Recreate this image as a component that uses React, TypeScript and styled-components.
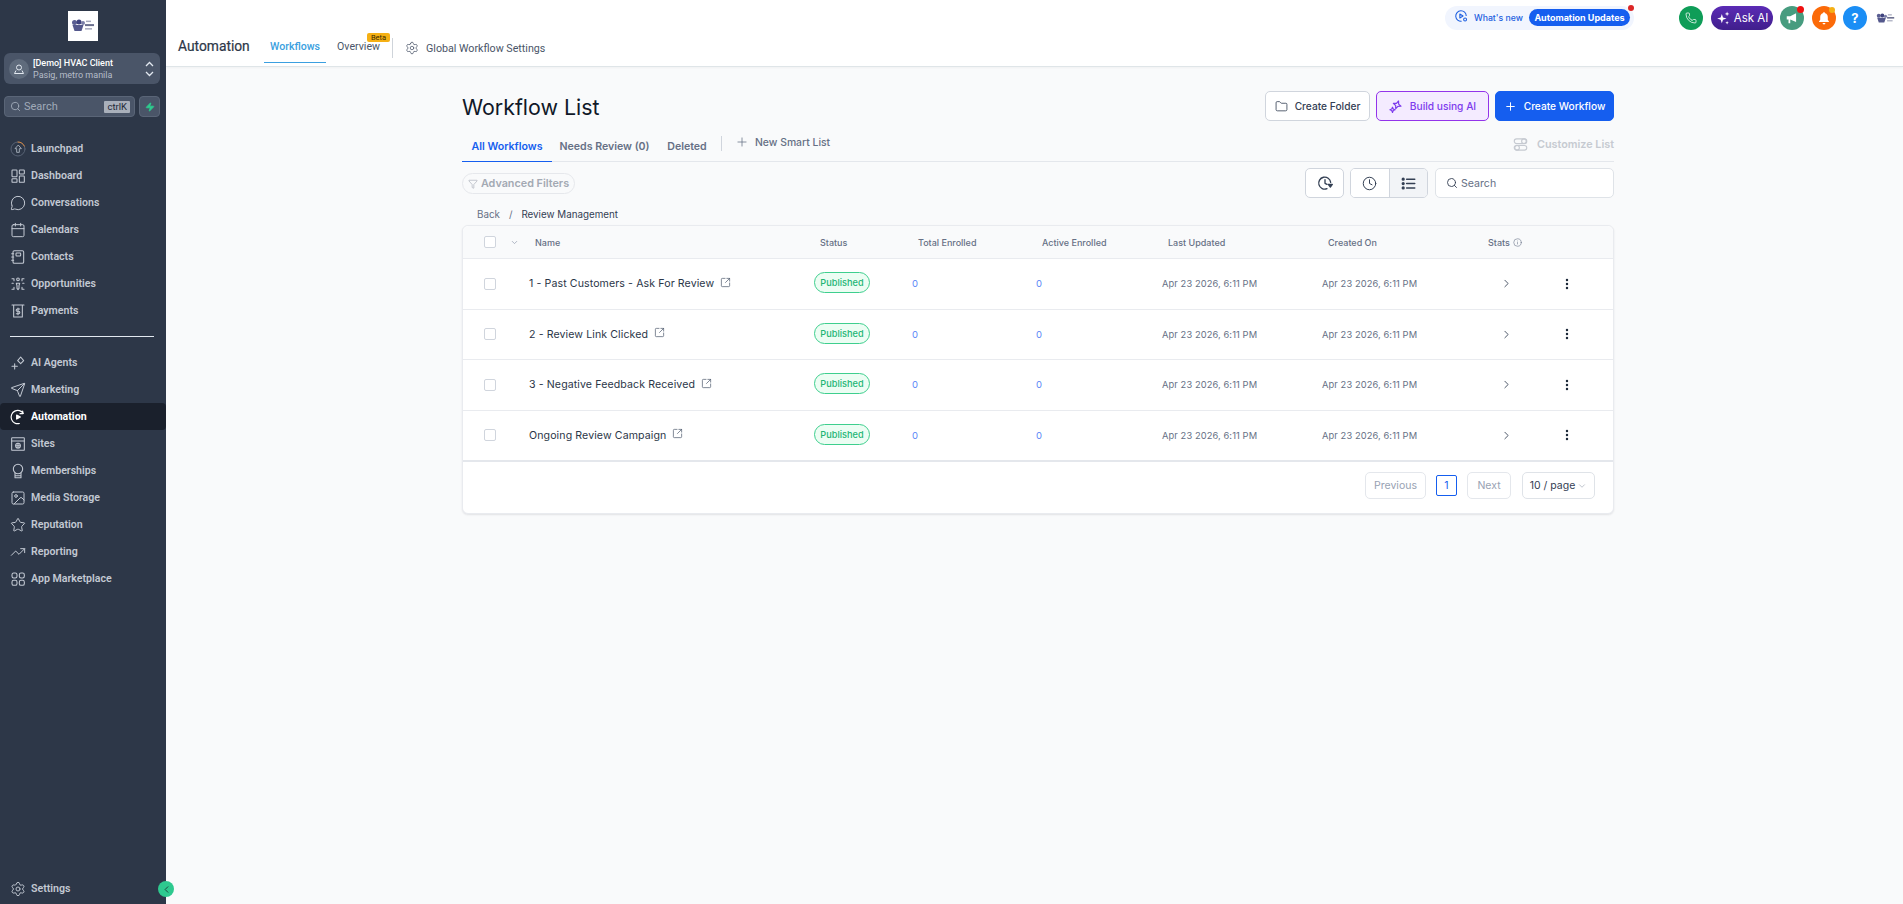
import React from "react";
import styled, { createGlobalStyle } from "styled-components";
import {
  Calendar,
  ChevronDown,
  ChevronLeft,
  ChevronRight,
  Clock,
  Folder,
  Funnel,
  Image as ImageIcon,
  Info,
  MessageCircle,
  MoreVertical,
  Phone,
  Plus,
  Search,
  Send,
  Settings,
  SquareArrowOutUpRight,
  Star,
  TrendingUp,
  Zap,
} from "lucide-react";

const GlobalStyle = createGlobalStyle`
  html, body { margin: 0; padding: 0; height: 100%; overflow: hidden; }
  body { font-family: Inter, "Liberation Sans", sans-serif; background: #f9fafb; }
  * { box-sizing: border-box; }
`;

const Page = styled.div`
  display: flex;
  width: 1903px;
  height: 904px;
  overflow: hidden;
`;

/* ---------- sidebar ---------- */

const Sidebar = styled.aside`
  position: relative;
  flex: 0 0 166px;
  display: flex;
  flex-direction: column;
  background: #2d3748;
  font-family: Roboto, Inter, sans-serif;
  padding-top: 11px;
`;

const LogoBox = styled.div`
  width: 30px;
  height: 30px;
  margin: 0 auto;
  background: #fff;
  display: flex;
  align-items: center;
  justify-content: center;
`;

const LocationBox = styled.div`
  display: flex;
  align-items: center;
  height: 31px;
  margin: 12px 6px 0 4px;
  padding: 0 6px 0 5px;
  border-radius: 6px;
  background: #4a5568;
`;

const LocationAvatar = styled.div`
  width: 20px;
  height: 20px;
  border-radius: 50%;
  background: #5f6b7c;
  display: flex;
  align-items: center;
  justify-content: center;
  margin-right: 4px;
  flex: none;
`;

const LocationText = styled.div`
  flex: 1;
  min-width: 0;
`;

const LocationName = styled.div`
  color: #fff;
  font-size: 9px;
  font-weight: 500;
  line-height: 12px;
`;

const LocationSub = styled.div`
  color: #b6bdc8;
  font-size: 9px;
  line-height: 12px;
`;

const SearchRow = styled.div`
  display: flex;
  gap: 4px;
  margin: 12px 6px 0 4px;
`;

const SideSearch = styled.div`
  flex: 1;
  height: 21px;
  display: flex;
  align-items: center;
  gap: 3px;
  padding: 0 4px 0 5px;
  border-radius: 4px;
  background: #4a5568;
  border: 1px solid #5a6577;
  color: #a0aab8;
  font-size: 11px;
`;

const KeyHint = styled.span`
  margin-left: auto;
  background: #a9b0bb;
  color: #1f2937;
  font-size: 9.5px;
  line-height: 12px;
  padding: 0 3px;
  border-radius: 1px;
`;

const BoltButton = styled.div`
  width: 21px;
  height: 21px;
  border-radius: 4px;
  background: #4a5568;
  border: 1px solid #5a6577;
  display: flex;
  align-items: center;
  justify-content: center;
`;

const NavGroup = styled.nav<{ $top: number }>`
  margin-top: ${(p) => p.$top}px;
  display: flex;
  flex-direction: column;
`;

const NavItem = styled.div<{ $active?: boolean }>`
  height: 27px;
  display: flex;
  align-items: center;
  gap: 5px;
  padding-left: 10px;
  border-radius: 4px;
  font-size: 10.6px;
  font-weight: ${(p) => (p.$active ? 700 : 600)};
  color: ${(p) => (p.$active ? "#ffffff" : "#c3c9d3")};
  background: ${(p) => (p.$active ? "#1a202c" : "transparent")};
  svg {
    flex: none;
    color: ${(p) => (p.$active ? "#ffffff" : "#c3c9d3")};
  }
`;

const SideDivider = styled.div`
  height: 1px;
  background: #e2e8f0;
  margin: 12px 12px 12px 10px;
`;

const SettingsRow = styled.div`
  margin-top: auto;
  margin-bottom: 2px;
`;

const CollapseButton = styled.div`
  position: absolute;
  right: -8px;
  bottom: 7px;
  width: 16px;
  height: 16px;
  border-radius: 50%;
  background: #2ec98f;
  color: #1f3b3a;
  display: flex;
  align-items: center;
  justify-content: center;
`;

/* ---------- top bar ---------- */

const Content = styled.div`
  flex: 1;
  min-width: 0;
  display: flex;
  flex-direction: column;
`;

const TopBar = styled.header`
  height: 67px;
  flex: none;
  background: #fff;
  border-bottom: 1px solid #dfe5e8;
  box-shadow: 0 1px 2px rgba(0, 0, 0, 0.04);
  display: flex;
  justify-content: space-between;
  font-family: Roboto, Inter, sans-serif;
`;

const TopLeft = styled.div`
  display: flex;
  align-items: flex-end;
  padding-left: 12px;
`;

const TopTitle = styled.div`
  width: 71px;
  font-size: 13.8px;
  font-weight: 400;
  color: #2d3748;
  line-height: 20px;
  margin: 0 15px 10px 0;
  white-space: nowrap;
  -webkit-text-stroke: 0.2px #2d3748;
`;

const TopTab = styled.div<{ $active?: boolean }>`
  position: relative;
  height: 34px;
  padding: 10px 6px 0;
  margin-right: ${(p) => (p.$active ? 5 : 0)}px;
  font-size: 10.6px;
  line-height: 16px;
  font-weight: ${(p) => (p.$active ? 500 : 400)};
  color: ${(p) => (p.$active ? "#3b9fe0" : "#4a5568")};
  border-bottom: 1px solid ${(p) => (p.$active ? "#3b9fe0" : "transparent")};
  margin-bottom: 3px;
  white-space: nowrap;
`;

const BetaBadge = styled.span`
  position: absolute;
  right: -4px;
  top: 4px;
  width: 23px;
  height: 9px;
  border-radius: 2px;
  background: #f5b014;
  color: #3a2c00;
  font-size: 7.5px;
  line-height: 9px;
  text-align: center;
`;

const TopDivider = styled.div`
  width: 1px;
  height: 20px;
  background: #cfd4da;
  margin: 0 12px 8px 6px;
`;

const GlobalLink = styled.div`
  display: flex;
  align-items: center;
  gap: 7px;
  font-size: 10.7px;
  color: #4a5568;
  height: 20px;
  margin-bottom: 8px;
  white-space: nowrap;
`;

const TopRight = styled.div`
  display: flex;
  align-items: flex-start;
  padding: 6px 7px 0 0;
`;

const NewsPill = styled.div`
  position: relative;
  width: 189px;
  height: 24px;
  margin-right: 45px;
  padding: 3px 4px 0 9px;
  border-radius: 12px;
  background: #f1f5fe;
  display: flex;
  align-items: flex-start;
  color: #1d5fe0;
  font-size: 8.7px;
  font-weight: 500;
  font-family: Inter, sans-serif;
`;

const NewsLabel = styled.span`
  margin-left: 6px;
  line-height: 18px;
  white-space: nowrap;
`;

const NewsTag = styled.span`
  margin-left: auto;
  width: 101px;
  height: 17px;
  border-radius: 9px;
  background: #155eef;
  color: #fff;
  font-size: 9px;
  font-weight: 700;
  line-height: 17px;
  text-align: center;
  white-space: nowrap;
`;

const Dot = styled.span<{ $color: string; $size: number; $top: number; $right: number }>`
  position: absolute;
  width: ${(p) => p.$size}px;
  height: ${(p) => p.$size}px;
  top: ${(p) => p.$top}px;
  right: ${(p) => p.$right}px;
  border-radius: 50%;
  background: ${(p) => p.$color};
`;

const RoundButton = styled.div<{ $bg: string; $gap: number }>`
  position: relative;
  width: 24px;
  height: 24px;
  border-radius: 50%;
  background: ${(p) => p.$bg};
  margin-right: ${(p) => p.$gap}px;
  color: #fff;
  display: flex;
  align-items: center;
  justify-content: center;
  font-size: 13px;
  font-weight: 700;
  font-family: Inter, sans-serif;
`;

const AskAi = styled.div`
  width: 62px;
  height: 24px;
  margin-right: 7px;
  border-radius: 12px;
  background: linear-gradient(180deg, #5b2bb5, #401f8c);
  color: #fff;
  font-size: 11.5px;
  display: flex;
  align-items: center;
  justify-content: center;
  gap: 4px;
  font-family: Inter, sans-serif;
`;

const TinyLogo = styled.div`
  width: 19px;
  height: 24px;
  margin-left: 2px;
  margin-right: 1px;
  display: flex;
  align-items: center;
`;

/* ---------- main ---------- */

const Main = styled.main`
  flex: 1;
  padding: 24px 0 0 296px;
  width: 1448px;
`;

const HeadRow = styled.div`
  display: flex;
  align-items: center;
  justify-content: space-between;
  height: 30px;
`;

const PageTitle = styled.h1`
  margin: 2px 0 0;
  font-size: 21.4px;
  font-weight: 400;
  color: #101828;
`;

const Actions = styled.div`
  display: flex;
  gap: 6px;
`;

const ActionButton = styled.button<{ $kind: "plain" | "ai" | "primary"; $w: number }>`
  width: ${(p) => p.$w}px;
  height: 30px;
  border-radius: 5px;
  display: flex;
  align-items: center;
  justify-content: center;
  gap: 7px;
  font-family: Inter, sans-serif;
  font-size: 10.2px;
  font-weight: 500;
  padding: 0;
  border: 1px solid
    ${(p) => (p.$kind === "plain" ? "#d0d5dd" : p.$kind === "ai" ? "#9333ea" : "#155eef")};
  background: ${(p) => (p.$kind === "plain" ? "#fff" : p.$kind === "ai" ? "#f4ebff" : "#155eef")};
  color: ${(p) => (p.$kind === "plain" ? "#344054" : p.$kind === "ai" ? "#7c3aed" : "#fff")};
`;

const TabsRow = styled.div`
  display: flex;
  align-items: flex-end;
  height: 34px;
  margin-top: 7px;
  border-bottom: 1px solid #e4e7ec;
`;

const ListTab = styled.div<{ $active?: boolean; $w: number }>`
  width: ${(p) => p.$w}px;
  height: 34px;
  margin-bottom: -1px;
  text-align: center;
  padding-top: 11px;
  font-size: 10.6px;
  line-height: 16px;
  font-weight: 600;
  color: ${(p) => (p.$active ? "#155eef" : "#667085")};
  border-bottom: 1px solid ${(p) => (p.$active ? "#155eef" : "transparent")};
`;

const TabSep = styled.div`
  width: 1px;
  height: 15px;
  background: #d0d5dd;
  margin: 0 13px 10px 4px;
  align-self: flex-end;
`;

const SmartList = styled.div`
  display: flex;
  align-items: center;
  gap: 6px;
  height: 20px;
  margin-bottom: 9px;
  font-size: 10.4px;
  font-weight: 500;
  color: #667085;
`;

const CustomizeList = styled.div`
  margin-left: auto;
  display: flex;
  align-items: center;
  gap: 9px;
  height: 20px;
  margin-bottom: 7px;
  font-size: 10.8px;
  font-weight: 600;
  color: #c6cad1;
`;

const FilterRow = styled.div`
  display: flex;
  align-items: flex-start;
  margin-top: 6px;
  height: 30px;
`;

const FilterPill = styled.div`
  margin-top: 5px;
  width: 113px;
  height: 21px;
  border-radius: 11px;
  border: 1px solid #e6e8ec;
  display: flex;
  align-items: center;
  justify-content: center;
  gap: 3px;
  font-size: 10.8px;
  font-weight: 600;
  color: #a3a9b3;
`;

const IconButton = styled.div`
  margin-left: auto;
  width: 39px;
  height: 30px;
  border-radius: 5px;
  border: 1px solid #d0d5dd;
  background: #fff;
  color: #344054;
  display: flex;
  align-items: center;
  justify-content: center;
`;

const ViewGroup = styled.div`
  margin-left: 6px;
  display: flex;
  width: 78px;
  height: 30px;
  border: 1px solid #d0d5dd;
  border-radius: 5px;
  overflow: hidden;
  background: #fff;
`;

const ViewCell = styled.div<{ $on?: boolean }>`
  flex: 1;
  display: flex;
  align-items: center;
  justify-content: center;
  color: #344054;
  background: ${(p) => (p.$on ? "#f2f4f7" : "#fff")};
  & + & {
    border-left: 1px solid #d0d5dd;
  }
`;

const TableSearch = styled.div`
  margin-left: 7px;
  width: 179px;
  height: 30px;
  border-radius: 5px;
  border: 1px solid #dfe3e8;
  background: #fff;
  display: flex;
  align-items: center;
  gap: 3px;
  padding-left: 10px;
  font-size: 10.6px;
  color: #667085;
  svg {
    color: #344054;
  }
`;

const Crumbs = styled.div`
  display: flex;
  height: 16px;
  margin-top: 9px;
  padding-left: 15px;
  font-size: 9.8px;
  line-height: 16px;
  color: #344054;
`;

const CrumbBack = styled.span`
  color: #667085;
`;

const CrumbSep = styled.span`
  margin: 0 9px;
  color: #667085;
`;

const Card = styled.section`
  margin-top: 2px;
  background: #fff;
  border: 1px solid #e9ebef;
  border-radius: 6px;
  box-shadow: 0 1px 2px rgba(16, 24, 40, 0.1);
  height: 289px;
`;

const columns = "66px 285px 98px 124px 126px 160px 160px 78px 1fr";

const HeadGrid = styled.div`
  display: grid;
  grid-template-columns: ${columns};
  align-items: center;
  height: 33px;
  border-bottom: 1px solid #e9ebef;
  background: #f9fafb;
  border-radius: 6px 6px 0 0;
`;

const HeadCell = styled.div`
  padding-left: 6px;
  font-size: 9px;
  font-weight: 500;
  color: #667085;
  white-space: nowrap;
  display: flex;
  align-items: center;
  gap: 3px;
`;

const CheckCell = styled.div`
  display: flex;
  align-items: center;
  padding-left: 21px;
  gap: 14px;
  color: #98a2b3;
`;

const CheckBox = styled.span`
  width: 12px;
  height: 12px;
  border-radius: 2px;
  border: 1px solid #d0d5dd;
  background: #fff;
`;

const Row = styled.div<{ $last?: boolean }>`
  display: grid;
  grid-template-columns: ${columns};
  align-items: center;
  height: ${(p) => (p.$last ? 51 : 50.5)}px;
  border-bottom: ${(p) => (p.$last ? "2px solid #e4e7ec" : "1px solid #e9ebef")};
`;

const NameCell = styled.div`
  display: flex;
  align-items: center;
  gap: 6px;
  font-size: 10.6px;
  letter-spacing: 0.1px;
  color: #2b3648;
  white-space: nowrap;
  svg {
    color: #475467;
    margin-top: -3px;
  }
`;

const StatusCell = styled.div`
  display: flex;
  margin-top: -2px;
`;

const StatusPill = styled.span`
  display: inline-block;
  width: 56px;
  height: 21px;
  border-radius: 11px;
  border: 1px solid #3ecf8e;
  background: #ecfdf3;
  color: #22b573;
  font-size: 9.2px;
  font-weight: 500;
  line-height: 19px;
  text-align: center;
`;

const CountCell = styled.div`
  font-size: 9.5px;
  font-weight: 400;
  color: #5b87f7;
`;

const DateCell = styled.div`
  font-size: 9.3px;
  letter-spacing: 0.1px;
  color: #667085;
  white-space: nowrap;
`;

const ChevronCell = styled.div`
  padding-left: 18px;
  color: #344054;
  display: flex;
`;

const MenuCell = styled.div`
  color: #1d2939;
  display: flex;
`;

const Pager = styled.div`
  display: flex;
  justify-content: flex-end;
  align-items: center;
  gap: 10px;
  height: 52px;
  padding: 0 18px 4px 0;
`;

const PagerButton = styled.div<{ $w: number }>`
  width: ${(p) => p.$w}px;
  height: 27px;
  border: 1px solid #e4e7ec;
  border-radius: 5px;
  display: flex;
  align-items: center;
  justify-content: center;
  font-size: 10.5px;
  color: #98a2b3;
`;

const PageNumber = styled.div`
  width: 21px;
  height: 21px;
  border: 1px solid #155eef;
  border-radius: 2px;
  color: #155eef;
  font-size: 10.5px;
  display: flex;
  align-items: center;
  justify-content: center;
`;

const PageSize = styled.div`
  width: 73px;
  height: 27px;
  border: 1px solid #dfe3e8;
  border-radius: 5px;
  background: #fff;
  margin-left: 1px;
  display: flex;
  align-items: center;
  justify-content: center;
  gap: 2px;
  font-size: 10.5px;
  color: #344054;
  svg {
    color: #b4bac4;
  }
`;

/* ---------- hand drawn icons ---------- */

type IconProps = { size?: number };

const Ico = ({ size = 16, children }: IconProps & { children: React.ReactNode }) => (
  <svg width={size} height={size} viewBox="0 0 24 24" fill="none" stroke="currentColor" strokeWidth={1.6} strokeLinecap="round" strokeLinejoin="round">
    {children}
  </svg>
);

const LaunchIcon = () => (
  <svg width={16} height={16} viewBox="0 0 24 24" fill="none" strokeWidth={1.4} strokeLinecap="round" strokeLinejoin="round">
    <circle cx="12" cy="12" r="10.5" stroke="#5a6577" />
    <path d="M12 1.5a10.5 10.5 0 0 1 9.6 6.2" stroke="#e08a3c" />
    <path d="M12 6.5l-4.5 5h2.5V17h4v-5.500h2.500z" stroke="#a7afbb" />
  </svg>
);

const DashIcon = () => (
  <Ico>
    <rect x="3" y="3" width="7.500" height="10" rx="1" />
    <rect x="14" y="3" width="7.500" height="6" rx="1" />
    <rect x="3" y="16" width="7.500" height="5.500" rx="1" />
    <rect x="14" y="12" width="7.500" height="9.500" rx="1" />
  </Ico>
);

const MarketIcon = () => (
  <Ico>
    <rect x="3" y="3" width="7.500" height="7.500" rx="2.500" />
    <rect x="14" y="3" width="7.500" height="7.500" rx="2.500" />
    <rect x="3" y="14" width="7.500" height="7.500" rx="2.500" />
    <rect x="14" y="14" width="7.500" height="7.500" rx="2.500" />
  </Ico>
);

const ContactsIcon = () => (
  <Ico>
    <rect x="4.500" y="2.500" width="16" height="19" rx="2" />
    <rect x="9" y="6" width="7" height="4.500" rx="1" />
    <path d="M2.500 7h3M2.500 12h3M2.500 17h3" />
  </Ico>
);

const OppIcon = () => (
  <Ico>
    <circle cx="12" cy="5" r="2" />
    <path d="M9.500 11h5l-1 3.500v4l-1.500 2-1.500-2v-4z" />
    <path d="M3 4h3v3M21 4h-3v3M3 20h3v-3M21 20h-3v-3M3 11h2M19 11h2" />
  </Ico>
);

const PayIcon = () => (
  <Ico>
    <path d="M3 3h18M5.500 3v18h13V3" />
    <path d="M14.500 9h-3.500a1.500 1.500 0 0 0 0 3.500h2a1.500 1.500 0 0 1 0 3.500h-3.500M12 7.500v10" />
  </Ico>
);

const AgentsIcon = () => (
  <Ico>
    <path d="M16 3l4.500 5.500L16 13l-4.500-4.500z" />
    <path d="M7 13v8M3 17h8" />
  </Ico>
);

const AutomationIcon = () => (
  <svg width={16} height={16} viewBox="0 0 24 24" fill="none" stroke="currentColor" strokeWidth={1.8} strokeLinecap="round" strokeLinejoin="round">
    <path d="M20 6.500A10 10 0 1 0 14 21.800" />
    <path d="M19 3v4h-4" />
    <path d="M10 9l5.500 3-5.500 3z" fill="currentColor" />
  </svg>
);

const SitesIcon = () => (
  <Ico>
    <rect x="2.500" y="2.500" width="19" height="19" rx="1" />
    <path d="M2.500 7.500h19" />
    <circle cx="12" cy="14.500" r="3.500" />
    <path d="M8.500 14.500h7M12 11v7" />
  </Ico>
);

const MemberIcon = () => (
  <Ico>
    <circle cx="12" cy="9" r="7" />
    <path d="M7.500 15v7h9v-7M8 19h8" />
  </Ico>
);

const CustomizeIcon = () => (
  <svg width={15} height={15} viewBox="0 0 24 24" fill="none" stroke="currentColor" strokeWidth={1.8}>
    <rect x="2" y="3" width="20" height="7.500" rx="3.700" />
    <circle cx="17.500" cy="6.700" r="3.700" />
    <rect x="2" y="13.500" width="20" height="7.500" rx="3.700" />
    <circle cx="6.500" cy="17.200" r="3.700" />
  </svg>
);

const SparkleIcon = ({ size = 14 }: IconProps) => (
  <svg width={size} height={size} viewBox="0 0 24 24" fill="none" stroke="currentColor" strokeWidth={2} strokeLinejoin="round">
    <path d="M14 3l2 5 5 2-5 2-2 5-2-5-5-2 5-2z" transform="rotate(20 14 10)" />
    <path d="M6 14l1.300 3.200L10.500 18.500l-3.200 1.300L6 23l-1.300-3.200L1.500 18.500l3.200-1.300z" />
  </svg>
);

const AskAiIcon = () => (
  <svg width={14} height={14} viewBox="0 0 24 24" fill="#fff">
    <path d="M10 5l2 6 6 2-6 2-2 6-2-6-6-2 6-2z" />
    <path d="M19 1l1 3 3 1-3 1-1 3-1-3-3-1 3-1zM19 17l.8 2.200L22 20l-2.200.8L19 23l-.8-2.200L16 20l2.200-.8z" />
  </svg>
);

const MegaphoneIcon = () => (
  <svg width={14} height={14} viewBox="0 0 24 24" fill="#fff">
    <path d="M3 9h6l10-5v15L9 14.500V21H6v-6.500H3z" />
  </svg>
);

const BellIcon = () => (
  <svg width={14} height={14} viewBox="0 0 24 24" fill="#fff">
    <path d="M12 2a2 2 0 0 1 2 2c3 1 4.500 3.500 4.500 6.500V15l2 3v1h-17v-1l2-3v-4.500C5.500 7.500 7 5 10 4a2 2 0 0 1 2-2z" />
    <path d="M9.500 20.500h5a2.500 2.500 0 0 1-5 0z" />
  </svg>
);

const NewsIcon = () => (
  <svg width={14} height={14} viewBox="0 0 24 24" fill="none" stroke="currentColor" strokeWidth={1.8} strokeLinejoin="round">
    <path d="M21 12a9 9 0 1 0-8 9" />
    <path d="M10 8.500l5.500 3.500-5.500 3.500z" />
    <circle cx="19" cy="18" r="2.500" />
  </svg>
);

const HistoryIcon = () => (
  <svg width={16} height={16} viewBox="0 0 24 24" fill="none" stroke="currentColor" strokeWidth={2} strokeLinecap="round" strokeLinejoin="round">
    <path d="M20.500 11A9 9 0 1 0 15 20.500" />
    <path d="M12 7v5.500l3 1.500" />
    <path d="M17 14h6l-3 4z" fill="currentColor" />
  </svg>
);

const ListIcon = () => (
  <svg width={15} height={15} viewBox="0 0 24 24" fill="none" stroke="currentColor" strokeWidth={2.4} strokeLinecap="round">
    <path d="M9 5h13M9 12h13M9 19h13" />
    <circle cx="3.500" cy="5" r="1.400" fill="currentColor" />
    <circle cx="3.500" cy="12" r="1.400" fill="currentColor" />
    <circle cx="3.500" cy="19" r="1.400" fill="currentColor" />
  </svg>
);

// the client logo is a small blurred emblem with three lines of wordmark beside it
const LogoMark = ({ width }: { width: number }) => (
  <svg width={width} height={width * 0.55} viewBox="0 0 24 13">
    <circle cx="3.500" cy="3.500" r="2.500" fill="#5a5e92" />
    <circle cx="8" cy="3" r="2.500" fill="#3f437e" />
    <circle cx="12" cy="4" r="2" fill="#7b7fa8" />
    <path d="M1.500 6h11l-2 6h-7z" fill="#54588c" />
    <rect x="15" y="1.500" width="5" height="1.500" fill="#a6a9bd" />
    <rect x="14" y="5" width="9" height="2" fill="#6b6f8e" />
    <rect x="14" y="9" width="7" height="1.500" fill="#a6a9bd" />
  </svg>
);

/* ---------- data ---------- */

const navTop: [string, React.ReactNode][] = [
  ["Launchpad", <LaunchIcon />],
  ["Dashboard", <DashIcon />],
  ["Conversations", <MessageCircle size={16} strokeWidth={1.5} />],
  ["Calendars", <Calendar size={16} strokeWidth={1.5} />],
  ["Contacts", <ContactsIcon />],
  ["Opportunities", <OppIcon />],
  ["Payments", <PayIcon />],
];

const navBottom: [string, React.ReactNode][] = [
  ["AI Agents", <AgentsIcon />],
  ["Marketing", <Send size={16} strokeWidth={1.5} />],
  ["Automation", <AutomationIcon />],
  ["Sites", <SitesIcon />],
  ["Memberships", <MemberIcon />],
  ["Media Storage", <ImageIcon size={16} strokeWidth={1.5} />],
  ["Reputation", <Star size={16} strokeWidth={1.5} />],
  ["Reporting", <TrendingUp size={16} strokeWidth={1.5} />],
  ["App Marketplace", <MarketIcon />],
];

const workflows = [
  "1 - Past Customers - Ask For Review",
  "2 - Review Link Clicked",
  "3 - Negative Feedback Received",
  "Ongoing Review Campaign",
];

const stamp = "Apr 23 2026, 6:11 PM";

export default function App() {
  return (
    <Page>
      <GlobalStyle />
      <Sidebar>
        <LogoBox>
          <LogoMark width={24} />
        </LogoBox>
        <LocationBox>
          <LocationAvatar>
            <svg width={12} height={12} viewBox="0 0 24 24" fill="none" stroke="#e2e8f0" strokeWidth={2}>
              <circle cx="12" cy="9" r="5" />
              <path d="M6 15l-3 6h18l-3-6" />
            </svg>
          </LocationAvatar>
          <LocationText>
            <LocationName>[Demo] HVAC Client</LocationName>
            <LocationSub>Pasig, metro manila</LocationSub>
          </LocationText>
          <svg width={9} height={16} viewBox="0 0 9 16" fill="none" stroke="#e2e8f0" strokeWidth={1.3}>
            <path d="M1 5l3.500-3.500L8 5M1 11l3.500 3.500L8 11" />
          </svg>
        </LocationBox>
        <SearchRow>
          <SideSearch>
            <Search size={11} />
            Search
            <KeyHint>ctrlK</KeyHint>
          </SideSearch>
          <BoltButton>
            <Zap size={10} fill="#2ecc8f" color="#2ecc8f" />
          </BoltButton>
        </SearchRow>
        <NavGroup $top={18}>
          {navTop.map(([label, icon]) => (
            <NavItem key={label}>
              {icon}
              {label}
            </NavItem>
          ))}
        </NavGroup>
        <SideDivider />
        <NavGroup $top={0}>
          {navBottom.map(([label, icon]) => (
            <NavItem key={label} $active={label === "Automation"}>
              {icon}
              {label}
            </NavItem>
          ))}
        </NavGroup>
        <SettingsRow>
          <NavItem>
            <Settings size={16} strokeWidth={1.4} />
            Settings
          </NavItem>
        </SettingsRow>
        <CollapseButton>
          <ChevronLeft size={11} strokeWidth={2} />
        </CollapseButton>
      </Sidebar>

      <Content>
        <TopBar>
          <TopLeft>
            <TopTitle>Automation</TopTitle>
            <TopTab $active>Workflows</TopTab>
            <TopTab>
              Overview
              <BetaBadge>Beta</BetaBadge>
            </TopTab>
            <TopDivider />
            <GlobalLink>
              <Settings size={14} strokeWidth={1.3} />
              Global Workflow Settings
            </GlobalLink>
          </TopLeft>
          <TopRight>
            <NewsPill>
              <NewsIcon />
              <NewsLabel>What&apos;s new</NewsLabel>
              <NewsTag>Automation Updates</NewsTag>
              <Dot $color="#dc2626" $size={6} $top={-1} $right={0} />
            </NewsPill>
            <RoundButton $bg="#0f9d58" $gap={8}>
              <Phone size={12} strokeWidth={1.5} />
            </RoundButton>
            <AskAi>
              <AskAiIcon />
              Ask AI
            </AskAi>
            <RoundButton $bg="#479c7f" $gap={8}>
              <MegaphoneIcon />
              <Dot $color="#ef1010" $size={7} $top={0} $right={0} />
            </RoundButton>
            <RoundButton $bg="#fb6a09" $gap={7}>
              <BellIcon />
              <Dot $color="#f5b014" $size={6} $top={1} $right={1} />
            </RoundButton>
            <RoundButton $bg="#1b8ef5" $gap={7}>
              ?
            </RoundButton>
            <TinyLogo>
              <LogoMark width={19} />
            </TinyLogo>
          </TopRight>
        </TopBar>

        <Main>
          <HeadRow>
            <PageTitle>Workflow List</PageTitle>
            <Actions>
              <ActionButton $kind="plain" $w={105}>
                <Folder size={13} strokeWidth={1.5} />
                Create Folder
              </ActionButton>
              <ActionButton $kind="ai" $w={113}>
                <SparkleIcon />
                Build using AI
              </ActionButton>
              <ActionButton $kind="primary" $w={119}>
                <Plus size={13} strokeWidth={1.8} />
                Create Workflow
              </ActionButton>
            </Actions>
          </HeadRow>

          <TabsRow>
            <ListTab $active $w={90}>All Workflows</ListTab>
            <ListTab $w={105}>Needs Review (0)</ListTab>
            <ListTab $w={60}>Deleted</ListTab>
            <TabSep />
            <SmartList>
              <Plus size={14} strokeWidth={1.3} />
              New Smart List
            </SmartList>
            <CustomizeList>
              <CustomizeIcon />
              Customize List
            </CustomizeList>
          </TabsRow>

          <FilterRow>
            <FilterPill>
              <Funnel size={10} strokeWidth={1.5} />
              Advanced Filters
            </FilterPill>
            <IconButton>
              <HistoryIcon />
            </IconButton>
            <ViewGroup>
              <ViewCell>
                <Clock size={15} strokeWidth={1.6} />
              </ViewCell>
              <ViewCell $on>
                <ListIcon />
              </ViewCell>
            </ViewGroup>
            <TableSearch>
              <Search size={12} strokeWidth={1.8} />
              Search
            </TableSearch>
          </FilterRow>

          <Crumbs>
            <CrumbBack>Back</CrumbBack>
            <CrumbSep>/</CrumbSep>
            Review Management
          </Crumbs>

          <Card>
            <HeadGrid>
              <CheckCell>
                <CheckBox />
                <ChevronDown size={9} />
              </CheckCell>
              <HeadCell>Name</HeadCell>
              <HeadCell>Status</HeadCell>
              <HeadCell>Total Enrolled</HeadCell>
              <HeadCell>Active Enrolled</HeadCell>
              <HeadCell>Last Updated</HeadCell>
              <HeadCell>Created On</HeadCell>
              <HeadCell>
                Stats
                <Info size={9} strokeWidth={1.5} />
              </HeadCell>
              <span />
            </HeadGrid>
            {workflows.map((name, i) => (
              <Row key={name} $last={i === workflows.length - 1}>
                <CheckCell>
                  <CheckBox />
                </CheckCell>
                <NameCell>
                  {name}
                  <SquareArrowOutUpRight size={11} strokeWidth={1.5} />
                </NameCell>
                <StatusCell>
                  <StatusPill>Published</StatusPill>
                </StatusCell>
                <CountCell>0</CountCell>
                <CountCell>0</CountCell>
                <DateCell>{stamp}</DateCell>
                <DateCell>{stamp}</DateCell>
                <ChevronCell>
                  <ChevronRight size={13} strokeWidth={1.6} />
                </ChevronCell>
                <MenuCell>
                  <MoreVertical size={14} strokeWidth={2.2} />
                </MenuCell>
              </Row>
            ))}
            <Pager>
              <PagerButton $w={61}>Previous</PagerButton>
              <PageNumber>1</PageNumber>
              <PagerButton $w={44}>Next</PagerButton>
              <PageSize>
                10 / page
                <ChevronDown size={10} />
              </PageSize>
            </Pager>
          </Card>
        </Main>
      </Content>
    </Page>
  );
}
